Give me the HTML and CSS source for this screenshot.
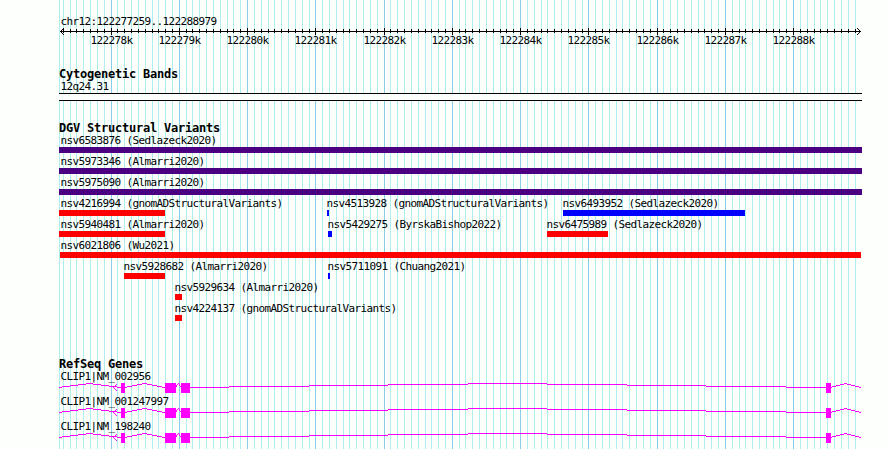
FILE: index.html
```html
<!DOCTYPE html>
<html lang="en">
<head>
<meta charset="utf-8">
<title>chr12:122277259..122288979</title>
<link rel="stylesheet" href="styles.css">
</head>
<body>
<main class="browser">
  <svg class="grid" width="890" height="449" aria-hidden="true"></svg>
  <header class="ruler">
    <div class="label region">chr12:122277259..122288979</div>
    <svg class="axis" width="890" height="9" aria-hidden="true"></svg>
    <div class="ticks"></div>
  </header>
  <section class="track cyto">
    <h2>Cytogenetic Bands</h2>
    <div class="label band-name">12q24.31</div>
    <div class="band"></div>
  </section>
  <section class="track variants">
    <h2>DGV Structural Variants</h2>
    <div class="rows"></div>
  </section>
  <section class="track genes">
    <h2>RefSeq Genes</h2>
    <div class="gene-rows"></div>
  </section>
</main>
<script src="tracks.js"></script>
</body>
</html>
```
FILE: styles.css
```css
* { box-sizing: border-box; }

body {
  margin: 0;
  background: #fdfffc;
  color: #000;
  font-family: "DejaVu Sans Mono", "Liberation Mono", monospace;
}

.browser {
  position: relative;
  width: 890px;
  height: 449px;
  overflow: hidden;
}

.grid {
  position: absolute;
  inset: 0;
}

svg {
  display: block;
  shape-rendering: crispEdges;
}

.minor { fill: #afeeee; }
.major { fill: #87ceeb; }

.ruler, .track { position: relative; }

.label, h2 {
  height: 12px;
  line-height: 12px;
  white-space: pre;
}

.label {
  font-size: 11px;
  line-height: 14px;
  letter-spacing: -0.622px;
  text-indent: 0.4px;
}

h2 {
  margin: 0 0 0 59px;
  font-size: 12px;
  font-weight: bold;
  letter-spacing: -0.225px;
}

.ruler {
  height: 68px;
  padding-top: 15px;
}

.region, .band-name { margin-left: 60px; }

.ticks {
  position: relative;
  height: 12px;
  margin-top: -2px;
}

.ticks .label {
  position: absolute;
  width: 42px;
}

.cyto { height: 54px; }

.band {
  width: 803px;
  height: 8px;
  margin: 1px 0 0 59px;
  border: solid #000;
  border-width: 1px 0;
  background: #fdfffc;
}

.variants { height: 236px; }

.row {
  position: relative;
  height: 21px;
}

.feature { position: absolute; }

.bar {
  height: 6px;
  margin: 1px 0 0 1px;
}

.flush .bar { margin-left: -1px; }
.edge .bar { margin-left: 0; }

.gain { background: #0000ff; }
.loss { background: #ff0000; }
.complex { background: #4b0082; }

.gene { height: 25px; }
.gene .label { margin-left: 60px; }
.gene svg { margin-top: 1px; }
.gene path { fill: #ff00ff; }
```
FILE: tracks.js
```js
const START = 122277259;
const END = 122288979;
const LEFT = 60;
const SCALE = 800 / (END - START + 1);
const toX = (pos) => Math.round(LEFT + (pos - START) * SCALE);
const rect = (x, y, w, h) => `M${x} ${y}h${w}v${h}h${-w}z`;

let minor = rect(59, 0, 1, 449);
let major = "";
let axis = rect(60, 4, 801, 1);
let labels = "";
for (let pos = 122277300; pos <= END; pos += 100) {
  const x = toX(pos);
  if (pos % 1000 === 0) {
    major += rect(x, 0, 1, 449);
    axis += rect(x, 1, 1, 7);
    labels += `<div class="label" style="left:${x - 21}px">${pos / 1000}k</div>`;
  } else {
    minor += rect(x, 0, 1, 449);
    axis += rect(x, 2, 1, 4);
  }
}
for (let i = 1; i <= 3; i++) {
  for (const y of [4 - i, 4 + i]) {
    axis += rect(60 + i, y, 1, 1) + rect(860 - i, y, 1, 1);
  }
}
document.querySelector(".grid").innerHTML =
  `<path class="minor" d="${minor}"/><path class="major" d="${major}"/>`;
document.querySelector(".axis").innerHTML = `<path d="${axis}"/>`;
document.querySelector(".ticks").innerHTML = labels;

// name, label x, bar width, type, bar alignment
const rows = [
  [["nsv6583876 (Sedlazeck2020)", 60, 803, "complex", "flush"]],
  [["nsv5973346 (Almarri2020)", 60, 803, "complex", "flush"]],
  [["nsv5975090 (Almarri2020)", 60, 803, "complex", "flush"]],
  [["nsv4216994 (gnomADStructuralVariants)", 60, 106, "loss", "flush"],
   ["nsv4513928 (gnomADStructuralVariants)", 326, 2, "gain", ""],
   ["nsv6493952 (Sedlazeck2020)", 562, 182, "gain", ""]],
  [["nsv5940481 (Almarri2020)", 60, 106, "loss", "flush"],
   ["nsv5429275 (ByrskaBishop2022)", 327, 4, "gain", ""],
   ["nsv6475989 (Sedlazeck2020)", 546, 61, "loss", ""]],
  [["nsv6021806 (Wu2021)", 60, 801, "loss", "edge"]],
  [["nsv5928682 (Almarri2020)", 123, 41, "loss", ""],
   ["nsv5711091 (Chuang2021)", 327, 2, "gain", ""]],
  [["nsv5929634 (Almarri2020)", 174, 7, "loss", ""]],
  [["nsv4224137 (gnomADStructuralVariants)", 174, 7, "loss", ""]],
];
document.querySelector(".rows").innerHTML = rows.map((row) =>
  `<div class="row">${row.map(([name, x, w, type, align]) =>
    `<div class="feature ${align}" style="left:${x}px"><div class="label">${name}</div>` +
    `<div class="bar ${type}" style="width:${w}px"></div></div>`).join("")}</div>`).join("");

// Introns are drawn as shallow peaks, one pixel column at a time.
function intron(x0, x1) {
  const half = (x1 - x0) / 2;
  let d = "";
  for (let x = x0; x < x1; x++) {
    const t = 1 - Math.abs(x + 1 - x0 - half) / half;
    d += rect(x, 4 - Math.round(4 * t), 1, 1);
  }
  return d;
}
let shape = "";
for (const [a, b] of [[59, 121], [125, 165], [190, 826], [831, 861]]) shape += intron(a, b);
for (const [x, w] of [[121, 4], [165, 11], [181, 9], [826, 5]]) shape += rect(x, 0, w, 10);
for (const [x, y, h] of [[176, 2, 2], [177, 1, 1], [178, 0, 1], [179, 1, 2], [180, 3, 1]]) shape += rect(x, y, 1, h);
for (let i = 0; i <= 3; i++) shape += rect(113 + i, 4 - i, 1, 1) + rect(113 + i, 4 + i, 1, 1);

document.querySelector(".gene-rows").innerHTML =
  ["CLIP1|NM_002956", "CLIP1|NM_001247997", "CLIP1|NM_198240"].map((name) =>
    `<div class="gene"><div class="label">${name}</div>` +
    `<svg width="890" height="10" aria-hidden="true"><path d="${shape}"/></svg></div>`).join("");
```
